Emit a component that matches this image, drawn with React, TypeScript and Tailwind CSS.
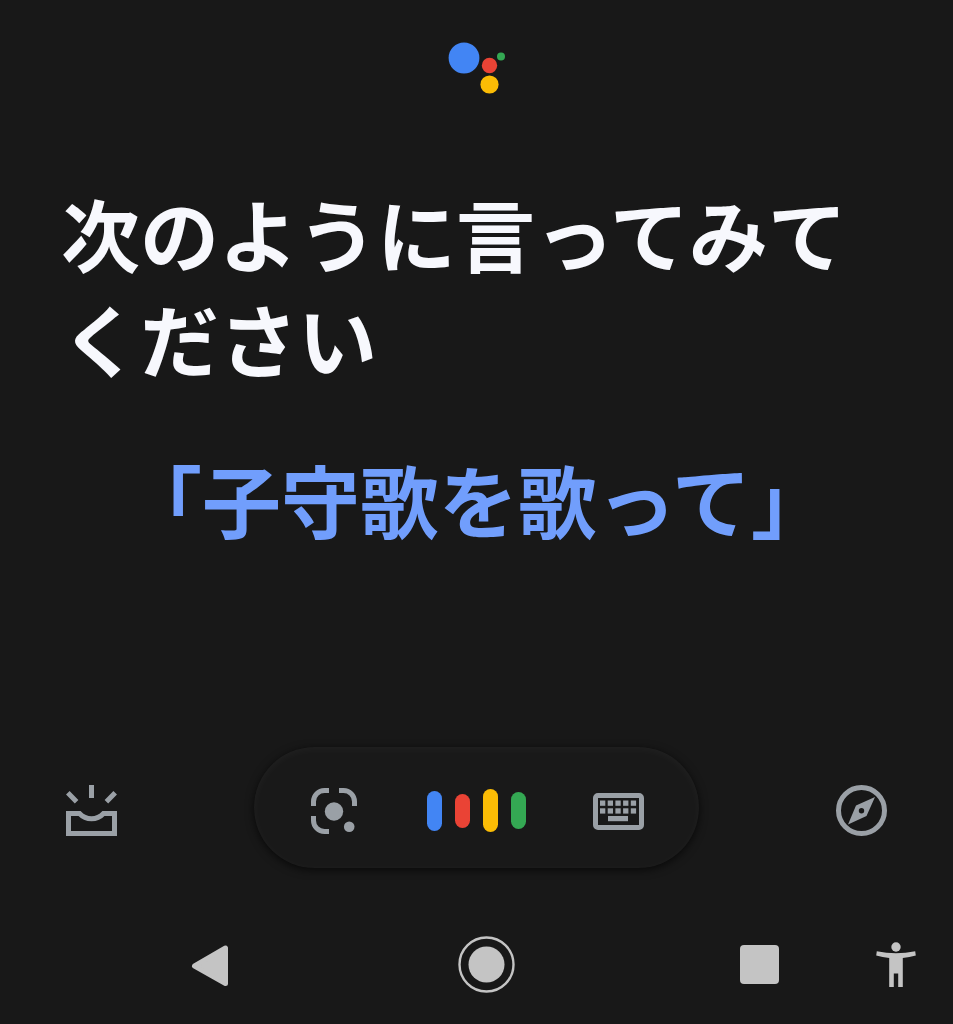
function AssistantLogo() {
  return (
    <svg width="58" height="54" viewBox="0 0 58 54" role="img" aria-label="アシスタント">
      <circle cx="16" cy="17" r="15.4" fill="#4285f4" />
      <circle cx="41.5" cy="24.5" r="7.7" fill="#ea4335" />
      <circle cx="41.5" cy="43.5" r="9.1" fill="#fbbc05" />
      <circle cx="53" cy="15.5" r="4" fill="#34a853" />
    </svg>
  );
}

function UpdatesIcon() {
  return (
    <svg width="52" height="52" viewBox="0 0 52 52" fill="none" stroke="currentColor" strokeWidth="5">
      <path d="M25.5 0v13M1.8 7.7l8.8 9M49.2 7.7l-8.8 9" />
      <path d="M2.5 28.5H13.5C20 35.5 31 35.5 37.5 28.5H48.5V48.5H2.5Z" />
    </svg>
  );
}

function LensIcon() {
  return (
    <svg width="52" height="52" viewBox="1 0 52 52" fill="none" stroke="currentColor" strokeWidth="5">
      <path d="M5.5 21V16.5A11 11 0 0 1 16.5 5.5H21" />
      <path d="M31 5.5H35.5A11 11 0 0 1 46.5 16.5V21" />
      <path d="M5.5 31V35.5A11 11 0 0 0 16.5 46.5H21" />
      <circle cx="26" cy="26.5" r="9.2" fill="currentColor" stroke="none" />
      <circle cx="41.2" cy="41.7" r="5.3" fill="currentColor" stroke="none" />
    </svg>
  );
}

function KeyboardIcon() {
  return (
    <svg width="52" height="52" viewBox="0 0 52 52" fill="currentColor">
      <rect x="3.5" y="10.5" width="46" height="32" rx="2.5" fill="none" stroke="currentColor" strokeWidth="5" />
      {[8, 15.7, 23.4, 31.1, 38.8].map((x) => (
        <g key={x}>
          <rect x={x} y="15.5" width="5.3" height="5.3" />
          <rect x={x} y="23.3" width="5.3" height="5.3" />
        </g>
      ))}
      <rect x="16" y="31" width="20" height="5.2" />
    </svg>
  );
}

function ExploreIcon() {
  return (
    <svg width="52" height="52" viewBox="0 0 52 52">
      <circle cx="26.5" cy="25.5" r="23" fill="none" stroke="currentColor" strokeWidth="5" />
      <path
        fill="currentColor"
        fillRule="evenodd"
        d="M40 12L31.5 31L13 39.5L21 20.5ZM26.5 23a2.7 2.7 0 1 0 0 5.4a2.7 2.7 0 1 0 0-5.4Z"
      />
    </svg>
  );
}

function PersonIcon() {
  return (
    <svg width="40" height="46" viewBox="0 0 40 46" fill="currentColor">
      <circle cx="20" cy="5" r="4.7" />
      <path d="M.8 9.3Q20 13.4 39.2 9.3L39.8 13.5Q33.5 15.3 26.8 15.9V45H22.2V31.5H17.8V45H13.2V15.9Q6.5 15.3.2 13.5Z" />
    </svg>
  );
}

export default function App() {
  return (
    <div className="flex min-h-screen flex-col bg-[#181818] font-['Noto_Sans_CJK_JP',sans-serif]">
      <header className="flex justify-center pt-[41px]">
        <AssistantLogo />
      </header>

      <main className="flex-1 px-[61px] pt-[85px] text-[79px] leading-[105px] font-bold">
        <h1 className="text-[#f7f8fd]">次のように言ってみてください</h1>
        <p className="mt-14 text-center text-[#719efc]">「子守歌を歌って」</p>
      </main>

      <div className="flex items-center justify-between px-[66px] text-[#9aa0a6]">
        <button type="button" aria-label="最新情報" className="pt-1.5">
          <UpdatesIcon />
        </button>
        <div className="flex h-[121px] w-[445px] items-center justify-between rounded-full bg-[#191919] px-[55px] pt-1.5 shadow-[0_2px_8px_rgba(0,0,0,0.65),inset_0_2px_10px_rgba(255,255,255,0.04)]">
          <button type="button" aria-label="レンズ">
            <LensIcon />
          </button>
          <button type="button" aria-label="音声入力" className="flex items-center gap-[13px]">
            <span className="h-10 w-[15px] rounded-full bg-[#4285f4]" />
            <span className="h-[34px] w-[15px] rounded-full bg-[#ea4335]" />
            <span className="h-[43px] w-[15px] rounded-full bg-[#fbbc05]" />
            <span className="h-[37px] w-[15px] rounded-full bg-[#34a853]" />
          </button>
          <button type="button" aria-label="キーボード">
            <KeyboardIcon />
          </button>
        </div>
        <button type="button" aria-label="探索" className="pt-1.5">
          <ExploreIcon />
        </button>
      </div>

      <nav className="mt-[68px] flex items-center pr-[37px] pb-[31px] pl-[20%] text-[#c4c4c4]">
        <div className="flex flex-1 items-center justify-between">
          <button type="button" aria-label="戻る">
            <svg width="42" height="42" viewBox="0 0 42 42" fill="currentColor" stroke="currentColor" strokeWidth="5" strokeLinejoin="round">
              <path d="M3.5 22L34.5 4V39.5Z" />
            </svg>
          </button>
          <button type="button" aria-label="ホーム">
            <svg width="57" height="57" viewBox="0 0 57 57">
              <circle cx="28.5" cy="28.5" r="27" fill="none" stroke="currentColor" strokeWidth="2.4" />
              <circle cx="28.5" cy="28.5" r="18" fill="currentColor" />
            </svg>
          </button>
          <button type="button" aria-label="最近使ったアプリ">
            <span className="block size-[39px] rounded bg-[#c4c4c4]" />
          </button>
        </div>
        <button type="button" aria-label="ユーザー補助" className="ml-[97px]">
          <PersonIcon />
        </button>
      </nav>
    </div>
  );
}
